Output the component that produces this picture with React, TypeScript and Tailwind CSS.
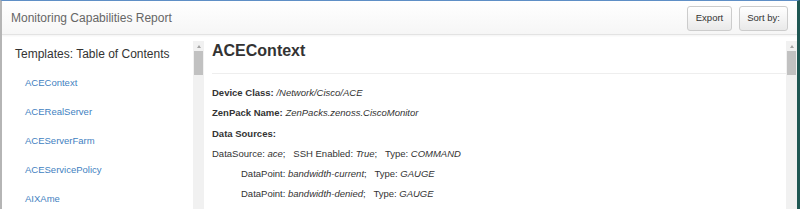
import React from "react";

const templates = ["ACEContext", "ACERealServer", "ACEServerFarm", "ACEServicePolicy", "AIXAme"];

function Scrollbar() {
    return (
        <div className="w-[11px] shrink-0 mt-[6px] bg-[#f1f1f1] flex flex-col items-center">
            <div className="h-[10px] flex items-center justify-center">
                <div className="w-0 h-0 border-l-[2.5px] border-r-[2.5px] border-b-[3px] border-l-transparent border-r-transparent border-b-[#a3a3a3]" />
            </div>
            <div className="w-[9px] h-[24px] bg-[#c1c1c1]" />
        </div>
    );
}

export default function App() {
    return (
        <div
            className="w-[800px] h-[209px] overflow-hidden flex flex-col bg-white text-[#333] border-t border-t-[#5f8fc6] border-l-2 border-l-[#b5b5b5] border-r-[3px] border-r-[#1f5753]"
            style={{ fontFamily: '"Liberation Sans", Arial, sans-serif' }}
        >
            {/* header bar */}
            <div className="h-[34px] shrink-0 flex items-center justify-between pl-[9px] pr-[9px] bg-gradient-to-b from-white to-[#f6f6f6] border-b border-[#e3e3e3] shadow-[0_1px_2px_rgba(0,0,0,0.05)]">
                <span className="text-[12px] text-[#666]">Monitoring Capabilities Report</span>
                <div className="flex gap-[7px] pt-[2px]">
                    <button className="h-[25px] w-[45px] text-[9.5px] text-[#333] bg-gradient-to-b from-white to-[#e9e9e9] border border-[#ccc] rounded-[3px]">Export</button>
                    <button className="h-[25px] w-[49px] text-[9.5px] text-[#333] bg-gradient-to-b from-white to-[#e9e9e9] border border-[#ccc] rounded-[3px]">Sort by:</button>
                </div>
            </div>

            <div className="flex flex-1 min-h-0">
                {/* table of contents */}
                <div className="w-[191px] shrink-0 pl-[13px] pt-[11px]">
                    <h3 className="text-[12px] leading-[16px] text-[#333]">Templates: Table of Contents</h3>
                    <ul className="pl-[10px] pt-[15px] flex flex-col gap-[17px]">
                        {templates.map((t) => (
                            <li key={t} className="text-[9.5px] leading-[12px]">
                                <a className="text-[#3f7fc1]">{t}</a>
                            </li>
                        ))}
                    </ul>
                </div>

                <div className="flex flex-1 min-w-0">
                    <Scrollbar />
                    {/* template detail */}
                    <div className="flex-1 min-w-0 pl-[8px] pt-[6px]">
                        <h2 className="text-[16px] leading-[20px] font-bold text-[#333]">ACEContext</h2>
                        <hr className="mt-[12px] border-t border-[#eee]" />
                        <div className="text-[9.5px] leading-[12px] pt-[13px] flex flex-col gap-[8.3px]">
                            <p>
                                <b>Device Class:</b> <i>/Network/Cisco/ACE</i>
                            </p>
                            <p>
                                <b>ZenPack Name:</b> <i>ZenPacks.zenoss.CiscoMonitor</i>
                            </p>
                            <p>
                                <b>Data Sources:</b>
                            </p>
                            <p className="whitespace-pre">
                                DataSource: <i>ace</i>;{"   "}SSH Enabled: <i>True</i>;{"   "}Type: <i>COMMAND</i>
                            </p>
                            <p className="whitespace-pre pl-[29px]">
                                DataPoint: <i>bandwidth-current</i>;{"   "}Type: <i>GAUGE</i>
                            </p>
                            <p className="whitespace-pre pl-[29px]">
                                DataPoint: <i>bandwidth-denied</i>;{"   "}Type: <i>GAUGE</i>
                            </p>
                        </div>
                    </div>
                    <Scrollbar />
                </div>
            </div>
        </div>
    );
}
